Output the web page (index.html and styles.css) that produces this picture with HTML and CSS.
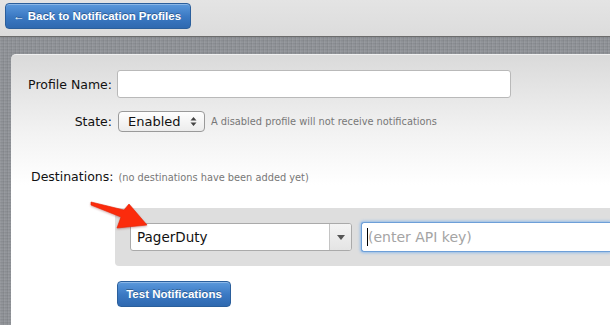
FILE: index.html
```html
<!DOCTYPE html>
<html lang="en">
<head>
  <meta charset="UTF-8">
  <title>Notification Profile</title>
  <link rel="stylesheet" href="styles.css">
</head>
<body>
  <div class="topbar">
    <a class="btn btn-back" href="#">&larr; Back to Notification Profiles</a>
  </div>
  <div class="main">
    <div class="panel">
      <div class="field">
        <label class="field-label">Profile Name:</label>
        <div class="text-input name-input"></div>
      </div>
      <div class="field field-state">
        <label class="field-label">State:</label>
        <div class="field-body">
          <span class="popup">
            Enabled
            <svg class="popup-arrows" width="7" height="11" viewBox="0 0 7 11">
              <path d="M3.5 1 L6.5 4.5 L0.5 4.5 Z M3.5 10 L6.5 6.5 L0.5 6.5 Z" fill="#444"/>
            </svg>
          </span>
          <span class="hint">A disabled profile will not receive notifications</span>
        </div>
      </div>
      <div class="destinations">
        Destinations: <span class="hint hint-dest">(no destinations have been added yet)</span>
      </div>
      <div class="well">
        <div class="chosen">
          <span class="chosen-text">PagerDuty</span>
          <span class="chosen-drop">
            <svg width="8" height="5" viewBox="0 0 8 5"><path d="M0 0 L8 0 L4 5 Z" fill="#555"/></svg>
          </span>
        </div>
        <div class="text-input api-input">
          <span class="caret"></span><span class="placeholder">(enter API key)</span>
        </div>
      </div>
      <a class="btn btn-test" href="#">Test Notifications</a>
    </div>
  </div>

  <!-- arrow pointing at the new destination -->
  <svg class="callout" width="70" height="40" viewBox="85 198 70 40">
    <polygon points="91,202 124,210 129,204 147,225 117,228 121,217 91,205" fill="#fb2b0c" stroke="#e82000" stroke-width="0.6" stroke-linejoin="round"/>
  </svg>
</body>
</html>
```

FILE: styles.css
```css
html, body {
  margin: 0;
  height: 100%;
  overflow: hidden;
}
body {
  display: flex;
  flex-direction: column;
  font-family: 'DejaVu Sans', 'Liberation Sans', sans-serif;
  color: #111;
  background: #8e9196;
  position: relative;
}
.topbar {
  flex: none;
  box-sizing: border-box;
  height: 37px;
  padding: 3px 0 0 5px;
  background: linear-gradient(#e4e4e4, #dcdcdc);
  border-bottom: 1px solid #6c6c6c;
}
.btn {
  display: inline-block;
  box-sizing: border-box;
  height: 26px;
  line-height: 24px;
  padding: 0 7px;
  border: 1px solid #2b5f9c;
  border-radius: 4px;
  background: linear-gradient(#5b99dc, #3a78c2 55%, #2f69b0);
  box-shadow: inset 0 1px 0 rgba(255,255,255,0.3);
  color: #fff;
  font-family: 'Liberation Sans', Arial, sans-serif;
  font-weight: bold;
  font-size: 11.5px;
  white-space: nowrap;
  text-decoration: none;
  text-shadow: 0 -1px 0 rgba(0,0,0,0.3);
}
.btn-back {
  width: 186px;
}
.main {
  flex: 1;
  display: flex;
  flex-direction: column;
  padding: 17px 0 0 11px;
  background:
    repeating-linear-gradient(90deg, rgba(255,255,255,0.05) 0 1px, transparent 1px 3px, rgba(0,0,0,0.05) 3px 4px),
    repeating-linear-gradient(0deg, rgba(255,255,255,0.04) 0 1px, transparent 1px 2px, rgba(0,0,0,0.04) 2px 3px),
    #8f9297;
}
.panel {
  flex: 1;
  padding-top: 15px;
  border-top-left-radius: 5px;
  border-top: 1px solid #f0f0f0;
  background: linear-gradient(#dadada, #f3f3f3 80px, #fff 130px);
}
.field {
  display: grid;
  grid-template-columns: 101px 1fr;
  column-gap: 5px;
  align-items: center;
}
.field-label {
  text-align: right;
  font-size: 12.5px;
}
.field-state {
  margin-top: 13px;
}
.field-body {
  display: flex;
  align-items: center;
}
.text-input {
  box-sizing: border-box;
  background: #fff;
  border: 1px solid #b9b9b9;
  border-radius: 3px;
}
.name-input {
  width: 394px;
  height: 28px;
}
.popup {
  display: inline-flex;
  align-items: center;
  justify-content: space-between;
  box-sizing: border-box;
  width: 87px;
  height: 21px;
  margin-left: 1px;
  padding: 0 7px 0 9px;
  border: 1px solid #9a9a9a;
  border-radius: 4px;
  background: linear-gradient(#fefefe, #ececec);
  font-size: 13px;
}
.hint {
  color: #777;
  font-size: 9.8px;
  margin-left: 6px;
}
.destinations {
  margin-top: 37px;
  padding-left: 20px;
  font-size: 12.5px;
}
.hint-dest {
  margin-left: 1px;
}
.well {
  display: flex;
  align-items: center;
  gap: 9px;
  margin: 24px 0 0 104px;
  padding: 14px 0 14px 15px;
  border-radius: 4px 0 0 4px;
  background: #dedede;
}
.chosen {
  display: flex;
  flex: none;
  box-sizing: border-box;
  width: 222px;
  height: 28px;
  border: 1px solid #aaa;
  border-radius: 3px;
  background: #fff;
}
.chosen-text {
  flex: 1;
  padding-left: 6px;
  line-height: 26px;
  font-size: 13.5px;
}
.chosen-drop {
  display: flex;
  align-items: center;
  justify-content: center;
  width: 21px;
  border-left: 1px solid #c4c4c4;
  background: linear-gradient(#f4f4f4, #e4e4e4);
  border-radius: 0 2px 2px 0;
}
.api-input {
  flex: 1;
  display: flex;
  align-items: center;
  height: 30px;
  padding-left: 5px;
  border: 1px solid #6d9fd8;
  border-right: none;
  border-radius: 3px 0 0 3px;
  box-shadow: 0 0 3px 1px #94bdea;
}
.caret {
  width: 1px;
  height: 18px;
  background: #000;
}
.placeholder {
  color: #a4a4a4;
  font-size: 14px;
}
.btn-test {
  margin: 15px 0 0 106px;
  width: 114px;
  padding: 0;
  text-align: center;
}
.callout {
  position: absolute;
  left: 85px;
  top: 198px;
  filter: drop-shadow(0 1px 1px rgba(120,0,0,0.35));
}
```
